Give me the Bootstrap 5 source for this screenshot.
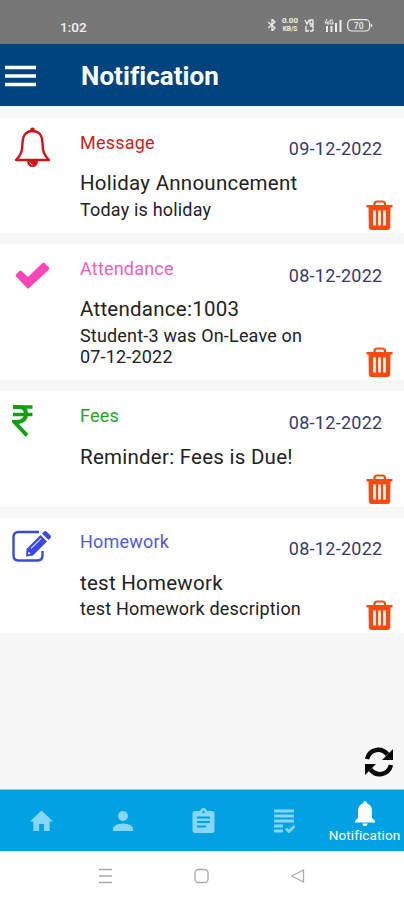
<!DOCTYPE html>
<html lang="en">
<head>
<meta charset="utf-8">
<meta name="viewport" content="width=device-width, initial-scale=1">
<title>Notification</title>
<link href="https://cdn.jsdelivr.net/npm/bootstrap@5.3.0/dist/css/bootstrap.min.css" rel="stylesheet">
<style>
body{font-family:Roboto,"Liberation Sans",sans-serif;background:#f7f7f8;color:#222;height:900px;overflow:hidden}
svg{display:block;flex:none}
.status-strip{height:43.5px;background:#777;color:#f0f0f0;padding:13px 31px 0 60px;font-size:13.5px;font-weight:500}
.rate{width:20px;font-size:6.5px;line-height:8px;font-weight:700;text-align:center}
.rate .num{font-size:8px;line-height:8px}
.app-head{height:62.5px;background:#00447f;color:#fff;padding:2px 0 0 5px;gap:45px}
.app-head h1{font-size:26px;font-weight:700;line-height:30px;padding-top:1px;letter-spacing:.05px}
.feed{padding-top:12px;gap:11px}
.notice{min-height:115.2px;background:#fff;padding-left:4px}
.notice.tall{min-height:136.3px}
.glyph{width:76px;flex:none;padding:8px 0 0 10px}
.glyph.tick{padding:18px 0 0 11px}
.glyph.rupee{padding:14px 0 0 8px}
.glyph.pencil{padding:12.5px 0 0 8px}
.words{min-width:0}
.kind{font-size:18px;line-height:22px;padding-top:13.6px;letter-spacing:.2px}
.headline{font-size:20.5px;line-height:25px;margin-top:17.5px;letter-spacing:.25px;white-space:nowrap}
.detail{font-size:18px;line-height:21.5px;margin-top:2.5px;letter-spacing:.18px;white-space:nowrap}
.side{width:110px;flex:none;padding:20.4px 11px 3px 0}
.date{font-size:18px;line-height:22px;color:#39396b;margin-right:10.5px;letter-spacing:.28px;white-space:nowrap}
.tabs{height:61px;background:#01a2e3;color:#86d7f7;box-shadow:0 -1px 0 #8fcde8}
.tabs .tab{width:81px;padding-left:2px}
.tabs .tab.current{color:#fff;font-size:13.5px;line-height:16px;margin-right:-1px;padding:3px 0 0;gap:1px;letter-spacing:.1px}
.refresh{padding:0 10px 13px 0}
.keys{height:49px;background:#fff;gap:80px}
</style>
</head>
<body class="d-flex flex-column">
<svg class="d-none">
  <symbol id="trash" viewBox="0 0 26 30"><path d="M8 5V4q0-2.500 3-2.500h4.500q3 0 3 2.500V5" fill="none" stroke="#f64a12" stroke-width="2.200"/><path d="M0 5H26V7.500H24L23.700 27.500Q23.500 30 21 30H5Q2.500 30 2.300 27.500L2 7.500H0Z" fill="#f64a12"/><path d="M8 10.500V25.500M13 10.500V25.500M18 10.500V25.500" stroke="#fff" stroke-width="2.600"/></symbol>
</svg>
<div class="status-strip d-flex justify-content-between align-items-start">
  <span class="pt-1 mt-1 lh-1">1:02</span>
  <div class="d-flex align-items-center pt-1">
    <svg width="8" height="12" viewBox="0 0 8 12" fill="none" stroke="#eee" stroke-width="1.300"><path d="M0 3 7 9 4 12V0L7 3 0 9"/></svg>
    <div class="rate ms-1"><div class="num">0.00</div><div>KB/S</div></div>
    <svg class="ms-1" width="12" height="13" viewBox="0 0 12 13" fill="none" stroke="#eee" stroke-width="1.300"><path d="M1 1 3 5 5 1M6 1H9V5H6ZM2 7V12H5M9 1V12M6 7H9M6 12H9"/></svg>
    <svg class="ms-2" width="19" height="13" viewBox="0 0 19 13"><path d="M3 0 1 4H4.500M4 2V6M9 1H6V5H9V3H7.500" fill="none" stroke="#eee"/><path d="M2 13V7H4V13ZM6.500 13V7H8.500V13ZM11 13V4H13V13ZM15.500 13V1H17.500V13Z" fill="#eee"/></svg>
    <svg class="ms-1" width="26" height="13" viewBox="0 0 26 13"><rect x=".7" y=".7" width="22" height="11.300" rx="4" fill="none" stroke="#eee" stroke-width="1.200"/><path d="M24 5Q26 6.500 24 8" fill="#eee" stroke="#eee"/><text x="11.700" y="9.500" text-anchor="middle" font-size="8.500" fill="#eee">70</text></svg>
  </div>
</div>
<header class="app-head d-flex align-items-center">
  <svg width="31" height="22" viewBox="0 0 31 22" stroke="#fff" stroke-width="3.300"><path d="M0 2.500H31M0 11H31M0 19.500H31"/></svg>
  <h1 class="mb-0">Notification</h1>
</header>
<main class="feed d-flex flex-column flex-grow-1">
  <article class="notice d-flex">
    <div class="glyph"><svg width="37" height="43" viewBox="0 0 37 43"><path d="M18.500 5C11 5 8.500 11 8.500 17C8.500 25 7 29 2 34H35C30 29 28.500 25 28.500 17C28.500 11 26 5 18.500 5Z" fill="none" stroke="#ce1616" stroke-width="2.400" stroke-linejoin="round"/><circle cx="18.500" cy="4" r="2.400" fill="#ce1616"/><path d="M13 35H24Q23.500 41 18.500 41Q13.500 41 13 35Z" fill="#ce1616"/><path d="M16 36.500Q16.500 38.500 18.500 39" fill="none" stroke="#fff"/></svg></div>
    <div class="words flex-fill"><div class="kind" style="color:#ce1d22">Message</div><div class="headline">Holiday Announcement</div><div class="detail">Today is holiday</div></div>
    <div class="side d-flex flex-column justify-content-between align-items-end"><span class="date">09-12-2022</span><svg width="27" height="30"><use href="#trash"/></svg></div>
  </article>
  <article class="notice tall d-flex">
    <div class="glyph tick"><svg width="35" height="27" viewBox="0 0 35 27"><path d="M1 12.500 4.500 9Q5.500 8 6.500 9L13 15 27.500 1Q28.500 0 29.500 1L34 5.500Q35 6.500 34 7.500L14 26Q13 27 12 26L1 14.500Q0 13.500 1 12.500Z" fill="#fb45b9"/></svg></div>
    <div class="words flex-fill"><div class="kind" style="color:#ee5dbc">Attendance</div><div class="headline">Attendance:1003</div><div class="detail">Student-3 was On-Leave on<br>07-12-2022</div></div>
    <div class="side d-flex flex-column justify-content-between align-items-end"><span class="date">08-12-2022</span><svg width="27" height="30"><use href="#trash"/></svg></div>
  </article>
  <article class="notice d-flex">
    <div class="glyph rupee"><svg width="21" height="32" viewBox="0 0 21 32"><path d="M1 2H20.500M1 9.500H20.500" stroke="#12a012" stroke-width="3.500"/><path d="M1 2H7Q14 2 14 9Q14 16 6 17H2.500L15 30.500" fill="none" stroke="#12a012" stroke-width="4"/></svg></div>
    <div class="words flex-fill"><div class="kind" style="color:#26a426">Fees</div><div class="headline">Reminder: Fees is Due!</div></div>
    <div class="side d-flex flex-column justify-content-between align-items-end"><span class="date">08-12-2022</span><svg width="27" height="30"><use href="#trash"/></svg></div>
  </article>
  <article class="notice d-flex">
    <div class="glyph pencil"><svg width="40" height="33" viewBox="0 0 40 33"><path d="M27 2H6.500Q1.500 2 1.500 7V25.500Q1.500 30.500 6.500 30.500H25.500Q30.500 30.500 30.500 25.500V21" fill="none" stroke="#3c49df" stroke-width="2.400"/><path d="M14.500 19 28.500 5 35 11.500 21 25.500 14 26.500Z" fill="#3c49df"/><path d="M30 3.500 32 1.500Q33.500 .5 35 2L38.500 5.500Q39.500 7 38.500 8L36.500 10Z" fill="#3c49df"/><path d="M19 18.500 29 8.500" stroke="#c5caff" stroke-width="1.200"/><path d="M16.500 21.500 18.500 23.500 16 24.500Z" fill="#fff"/></svg></div>
    <div class="words flex-fill"><div class="kind" style="color:#5159d8">Homework</div><div class="headline">test Homework</div><div class="detail">test Homework description</div></div>
    <div class="side d-flex flex-column justify-content-between align-items-end"><span class="date">08-12-2022</span><svg width="27" height="30"><use href="#trash"/></svg></div>
  </article>
  <div class="refresh mt-auto d-flex justify-content-end"><svg width="30" height="30" viewBox="0 0 30 30"><path d="M3 12C6 1 18 .5 23.500 7.500M27 18C24 29 12 29.500 6.500 22.500" fill="none" stroke="#080808" stroke-width="4.500"/><path d="M29 2V13H18ZM1 28V17H12Z" fill="#080808"/></svg></div>
</main>
<nav class="tabs d-flex justify-content-between align-items-center">
  <div class="tab d-flex justify-content-center"><svg width="23" height="22" viewBox="0 0 24 22"><path d="M12 0 24 11.500H20.500V21.500H14.500V14H9.500V21.500H3.500V11.500H0Z" fill="currentColor"/></svg></div>
  <div class="tab d-flex justify-content-center"><svg width="20" height="20" viewBox="0 0 20 20" fill="currentColor"><circle cx="10" cy="5" r="5"/><path d="M0 20V17Q1 13 10 12.500Q19 13 20 17V20Z"/></svg></div>
  <div class="tab d-flex justify-content-center"><svg width="23" height="26" viewBox="0 0 23 26"><path d="M3 3H8Q9 0 11.500 0T15 3H20Q22.500 3 22.500 5.500V22.500Q22.500 25 20 25H3Q.5 25 .5 22.500V5.500Q.5 3 3 3Z" fill="currentColor"/><path d="M5 9.500H18M5 14H18M5 18.500H14" stroke="#01a2e3" stroke-width="2"/><circle cx="11.500" cy="4" r="1.200" fill="#01a2e3"/></svg></div>
  <div class="tab d-flex justify-content-center"><svg width="21" height="24" viewBox="0 0 21 24" fill="none" stroke="currentColor" stroke-width="2.800"><path d="M0 2H20M0 7H20M0 12H20M0 17H9M0 22H9M12 19.500 15 22.500 20.500 17"/></svg></div>
  <div class="tab current d-flex flex-column align-items-center"><svg width="20" height="25" viewBox="0 0 20 25" fill="currentColor"><path d="M8 2.500Q8 0 10 0T12 2.500Q17 4 17 10V17L20 20V21.500H0V20L3 17V10Q3 4 8 2.500ZM7.500 22.500H12.500Q12.500 25 10 25T7.500 22.500Z"/></svg><span>Notification</span></div>
</nav>
<footer class="keys d-flex justify-content-center align-items-center">
  <svg width="16" height="16" viewBox="0 0 16 16" stroke="#aaa" stroke-width="1.300"><path d="M1 1.500H14M1 8H14M1 14.500H14"/></svg>
  <svg width="16" height="16" viewBox="0 0 16 16"><rect x="1" y="1.500" width="13" height="13" rx="3.500" fill="none" stroke="#aaa" stroke-width="1.300"/></svg>
  <svg width="16" height="16" viewBox="0 0 16 16"><path d="M1.500 8 13.500 2V14Z" fill="none" stroke="#aaa" stroke-width="1.300" stroke-linejoin="round"/></svg>
</footer>
<script src="https://cdn.jsdelivr.net/npm/bootstrap@5.3.0/dist/js/bootstrap.bundle.min.js"></script>
</body>
</html>
